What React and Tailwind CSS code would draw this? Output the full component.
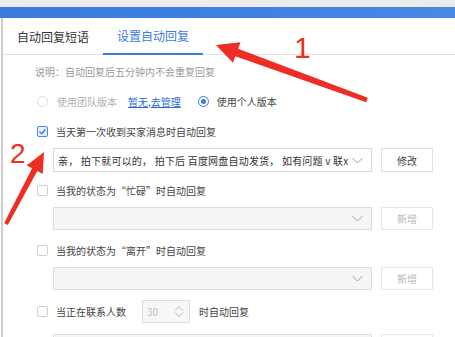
import { useState } from 'react'

const rules = [
  { id: 'first', label: '当天第一次收到买家消息时自动回复', checked: true, value: '亲， 拍下就可以的， 拍下后 百度网盘自动发货， 如有问题 v 联x', action: '修改' },
  { id: 'busy', label: '当我的状态为“忙碌”时自动回复', checked: false, value: '', action: '新增' },
  { id: 'away', label: '当我的状态为“离开”时自动回复', checked: false, value: '', action: '新增' },
]

export default function App() {
  const [tab, setTab] = useState(1)

  return (
    <div className="relative w-[455px] h-[337px] overflow-hidden bg-white text-[10px] text-[#444] font-['Noto_Sans_CJK_SC','Noto_Sans',sans-serif]">
      <div className="h-[7px] bg-[#ececec]" />
      <div className="h-[11px] bg-gradient-to-r from-[#3b7bdf] via-[#3d7fe2] to-[#4a88e4]" />

      <div className="ml-[1px] h-full border-l-2 border-[#cfcfcf]">
        <div className="flex h-[37px] border-b border-[#e2e2e2]">
          {['自动回复短语', '设置自动回复'].map((name, i) => (
            <button
              key={name}
              onClick={() => setTab(i)}
              className={
                tab === i
                  ? 'w-[100px] h-[37px] text-[12px] text-[#3c7ce0] border-b-2 border-[#3c7ce0] pt-[1px]'
                  : 'w-[100px] h-[37px] text-[12px] text-[#333] pt-[1px]'
              }
            >
              {name}
            </button>
          ))}
        </div>

        <div className="pl-[34px]">
          <div className="mt-[10px] h-[14px] leading-[14px] -ml-[2px] text-[#9a9a9a]">
            说明：自动回复后五分钟内不会重复回复
          </div>

          <div className="mt-[15px] h-[14px] flex items-center">
            <span className="w-[11px] h-[11px] rounded-full border border-[#dedede]" />
            <span className="ml-[9px] text-[#b0b0b0]">使用团队版本</span>
            <a className="ml-[11px] text-[#2b6bd6] underline">暂无,去管理</a>
            <span className="ml-[17px] w-[11px] h-[11px] rounded-full border border-[#3c7ce0] flex items-center justify-center">
              <span className="w-[5px] h-[5px] rounded-full bg-[#3c7ce0]" />
            </span>
            <span className="ml-[8px] text-[#444]">使用个人版本</span>
          </div>

          {rules.map((r, i) => (
            <div key={r.id}>
              <div className={i === 0 ? 'mt-[16px] h-[14px] flex items-center' : i === 1 ? 'mt-[11px] h-[14px] flex items-center' : 'mt-[13px] h-[14px] flex items-center'}>
                <Check checked={r.checked} />
                <span className="ml-[8px]">{r.label}</span>
              </div>
              <div className={i === 0 ? 'mt-[10px] ml-[16px] flex h-[24px]' : 'mt-[10px] ml-[16px] flex h-[23px]'}>
                <div className={r.value ? 'w-[319px] flex items-center border border-[#d9d9d9] bg-white pl-[4px] pr-[8px]' : 'w-[319px] flex items-center border border-[#dcdcdc] bg-[#f5f5f5] pl-[4px] pr-[8px]'}>
                  <span className="flex-1 whitespace-nowrap overflow-hidden text-[#333] tracking-[0.2px]">{r.value}</span>
                  <Chevron />
                </div>
                <button className={r.value ? 'ml-[9px] w-[52px] border border-[#e2e2e2] bg-white text-[#444]' : 'ml-[9px] w-[52px] border border-[#e6e6e6] bg-white text-[#b8b8b8]'}>
                  {r.action}
                </button>
              </div>
            </div>
          ))}

          <div className="mt-[10px] h-[23px] flex items-center">
            <Check checked={false} />
            <span className="ml-[8px]">当正在联系人数</span>
            <div className="ml-[16px] w-[48px] h-[23px] border border-[#dedede] bg-[#f7f7f7] flex items-center pl-[4px] pr-[5px]">
              <span className="flex-1 text-[#c0c0c0]">30</span>
              <svg width="10" height="13" viewBox="0 0 10 13" fill="none" stroke="#b5b5b5" strokeWidth="1">
                <path d="M1 5.5 L5 1.5 L9 5.5" />
                <path d="M1 7.5 L5 11.5 L9 7.5" />
              </svg>
            </div>
            <span className="ml-[9px]">时自动回复</span>
          </div>

          <div className="mt-[11px] ml-[16px] flex h-[23px]">
            <div className="w-[319px] border border-[#dcdcdc] bg-[#f5f5f5]" />
            <button className="ml-[9px] w-[52px] border border-[#e6e6e6] bg-white" />
          </div>
        </div>
      </div>

      <svg className="absolute inset-0 pointer-events-none" width="455" height="337" viewBox="0 0 455 337">
        <polygon
          fill="#ee2d24"
          points="216,45 240.5,42.2 238.1,48.7 367.8,97.7 366.2,102.3 235.3,56.3 232.9,62.8"
        />
        <polygon
          fill="#ee2d24"
          points="44,152 42.7,173.9 37.3,171.1 7.8,225.1 4.2,222.9 32.1,168.3 26.7,165.5"
        />
      </svg>
      <span className="absolute left-[294px] top-[33px] text-[30px] leading-none text-[#ee2d24] font-['Liberation_Sans',sans-serif] font-light">1</span>
      <span className="absolute left-[10px] top-[140px] text-[28px] leading-none text-[#ee2d24] font-['Liberation_Sans',sans-serif] font-medium">2</span>
    </div>
  )
}

function Check({ checked }) {
  if (checked) {
    return (
      <span className="w-[11px] h-[11px] rounded-[2px] border border-[#4a88e0] bg-[#e8f1fd] flex items-center justify-center">
        <svg width="9" height="9" viewBox="0 0 9 9" fill="none" stroke="#3c7ce0" strokeWidth="1.4">
          <path d="M1.5 4.5 L3.7 6.7 L7.5 2.3" />
        </svg>
      </span>
    )
  }
  return <span className="w-[11px] h-[11px] rounded-[2px] border border-[#cfcfcf] bg-white" />
}

function Chevron() {
  return (
    <svg width="11" height="7" viewBox="0 0 11 7" fill="none" stroke="#a0a0a0" strokeWidth="1">
      <path d="M0.5 1 L5.5 6 L10.5 1" />
    </svg>
  )
}
